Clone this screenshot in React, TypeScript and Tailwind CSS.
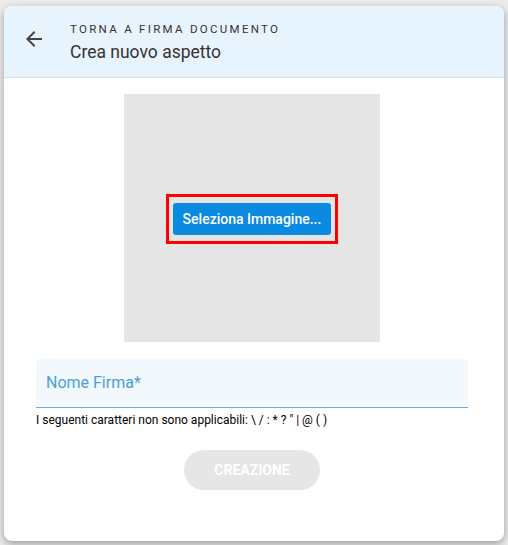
function BackIcon() {
  return (
    <svg viewBox="0 0 24 24" className="h-[24px] w-[24px]" fill="currentColor">
      <path d="M20 11H7.83l5.59-5.59L12 4l-8 8 8 8 1.41-1.41L7.83 13H20v-2z" />
    </svg>
  );
}

function App() {
  return (
    <div
      className="h-[545px] w-[508px] overflow-hidden bg-[#ececec] px-[4px] pt-[6px]"
      style={{ fontFamily: 'Roboto, "Liberation Sans", sans-serif' }}
    >
      <div className="flex h-[535px] flex-col overflow-hidden rounded-lg bg-white shadow-[0_3px_8px_rgba(0,0,0,0.35)]">
        <header className="flex h-[72px] items-center border-b border-[#cfdde8] bg-[#e8f4fd] pl-[18px]">
          <button className="-mt-[6px] flex h-[24px] w-[24px] items-center justify-center text-[#444]">
            <BackIcon />
          </button>
          <div className="ml-[24px] flex flex-col">
            <span className="text-[11.5px] uppercase leading-[16px] tracking-[0.2em] text-[#333]">
              Torna a firma documento
            </span>
            <span className="mt-[4px] text-[17.5px] leading-[22px] text-[#333]">Crea nuovo aspetto</span>
          </div>
        </header>

        <div className="flex flex-col pl-[32px] pr-[36px] pt-[16px]">
          <div className="mx-auto flex h-[248px] w-[256px] items-center justify-center bg-[#e5e5e5]">
            <div className="mt-[2px] border-[3px] border-[#ff0000] px-[4px] py-[6px]">
              <button className="h-[32px] w-[158px] rounded-[3px] bg-[#0a8ae0] text-[14px] font-medium text-white">
                Seleziona Immagine...
              </button>
            </div>
          </div>

          <div className="mt-[17px] flex h-[49px] items-center rounded-t-[4px] border-b border-[#64b0e4] bg-[#f3f8fc] px-[10px]">
            <span className="text-[16px] text-[#4a9fd8]">Nome Firma*</span>
          </div>
          <p className="mt-[4px] text-[12px] leading-[16px] text-black">
            I seguenti caratteri non sono applicabili: \ / : * ? " | @ ( )
          </p>

          <button
            disabled
            className="mx-auto mt-[22px] h-[40px] w-[136px] rounded-full bg-[#e6e6e6] text-[14px] font-bold uppercase text-white"
          >
            Creazione
          </button>
        </div>
      </div>
    </div>
  );
}

export default App;
